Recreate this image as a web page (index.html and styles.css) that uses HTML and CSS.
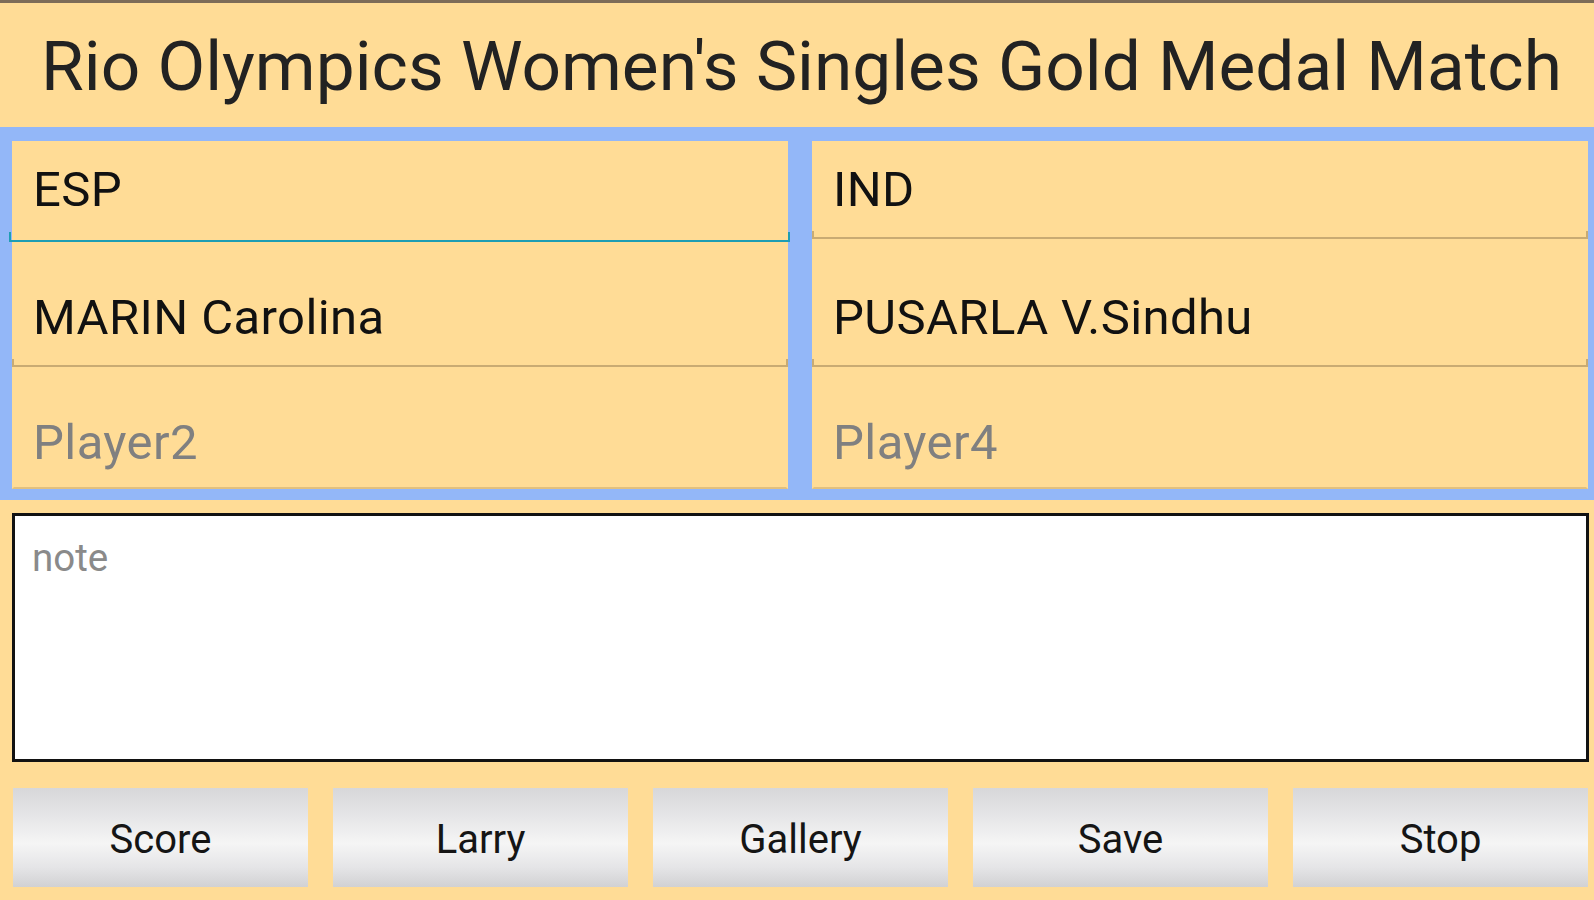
FILE: index.html
```html
<!DOCTYPE html>
<html lang="en">
<head>
<meta charset="utf-8">
<title>Match Setup</title>
<link rel="stylesheet" href="styles.css">
</head>
<body>
<div class="app">
  <div class="statusline"></div>
  <h1 class="title">Rio Olympics Women's Singles Gold Medal Match</h1>
  <div class="players">
    <div class="team">
      <div class="field row1 focused"><span class="val">ESP</span></div>
      <div class="field row2"><span class="val">MARIN Carolina</span></div>
      <div class="field row3 last"><span class="hint">Player2</span></div>
    </div>
    <div class="team">
      <div class="field row1"><span class="val">IND</span></div>
      <div class="field row2"><span class="val">PUSARLA V.Sindhu</span></div>
      <div class="field row3 last"><span class="hint">Player4</span></div>
    </div>
  </div>
  <div class="note"><span class="note-hint">note</span></div>
  <div class="buttons">
    <div class="btn">Score</div>
    <div class="btn">Larry</div>
    <div class="btn">Gallery</div>
    <div class="btn">Save</div>
    <div class="btn">Stop</div>
  </div>
</div>
</body>
</html>
```

FILE: styles.css
```css
* { box-sizing: border-box; }
html, body {
  margin: 0;
  padding: 0;
  background: #ffdc96;
  font-family: Roboto, "Liberation Sans", sans-serif;
}
.app {
  width: 1594px;
  height: 900px;
  overflow: hidden;
  display: flex;
  flex-direction: column;
}
.statusline {
  height: 3px;
  background: #7d6c58;
}
.title {
  margin: 0;
  height: 124px;
  padding: 23px 0 20px 41px;
  font-size: 69.4px;
  line-height: 81px;
  font-weight: 400;
  color: #222222;
  white-space: nowrap;
}
.players {
  height: 373px;
  background: #93b7f8;
  padding: 14px 6px 11px 12px;
  display: grid;
  grid-template-columns: 1fr 1fr;
  column-gap: 24px;
}
.team {
  background: #ffdc96;
  display: flex;
  flex-direction: column;
}
.field {
  position: relative;
  display: flex;
  align-items: flex-end;
  padding: 0 0 21px 21px;
  font-size: 49px;
  line-height: 54px;
  letter-spacing: 0.4px;
  white-space: nowrap;
}
.field::after {
  content: "";
  position: absolute;
  left: 0;
  right: 0;
  bottom: -1px;
  height: 6px;
  border: 2px solid #c9ab73;
  border-top: none;
}
.field.last::after {
  border-color: transparent;
  border-bottom-color: #e2c07e;
  height: 2px;
  bottom: 0;
}
.field.focused::after {
  left: -3px;
  right: -2px;
  bottom: -4px;
  height: 8px;
  border-color: #1f9db3;
}
.row1 { height: 97px; }
.row2 { height: 128px; }
.row3 { height: 123px; padding-bottom: 19px; }
.val { color: #111111; }
.hint { color: #808080; }
.note {
  margin: 13px 5px 0 12px;
  height: 249px;
  background: #ffffff;
  border: 3px solid #121212;
  padding: 20px 0 0 17px;
}
.note-hint {
  font-size: 38.5px;
  line-height: 44px;
  color: #8a8a8a;
}
.buttons {
  margin-top: 26px;
  height: 99px;
  padding: 0 6px 0 13px;
  display: flex;
  gap: 25px;
}
.btn {
  flex: 1;
  display: flex;
  align-items: center;
  justify-content: center;
  padding-top: 4px;
  font-size: 40px;
  color: #151515;
  background: linear-gradient(#d7d7d9 0%, #e2e2e4 22%, #f5f5f5 56%, #e5e5e7 80%, #d1d1d3 100%);
}
```
